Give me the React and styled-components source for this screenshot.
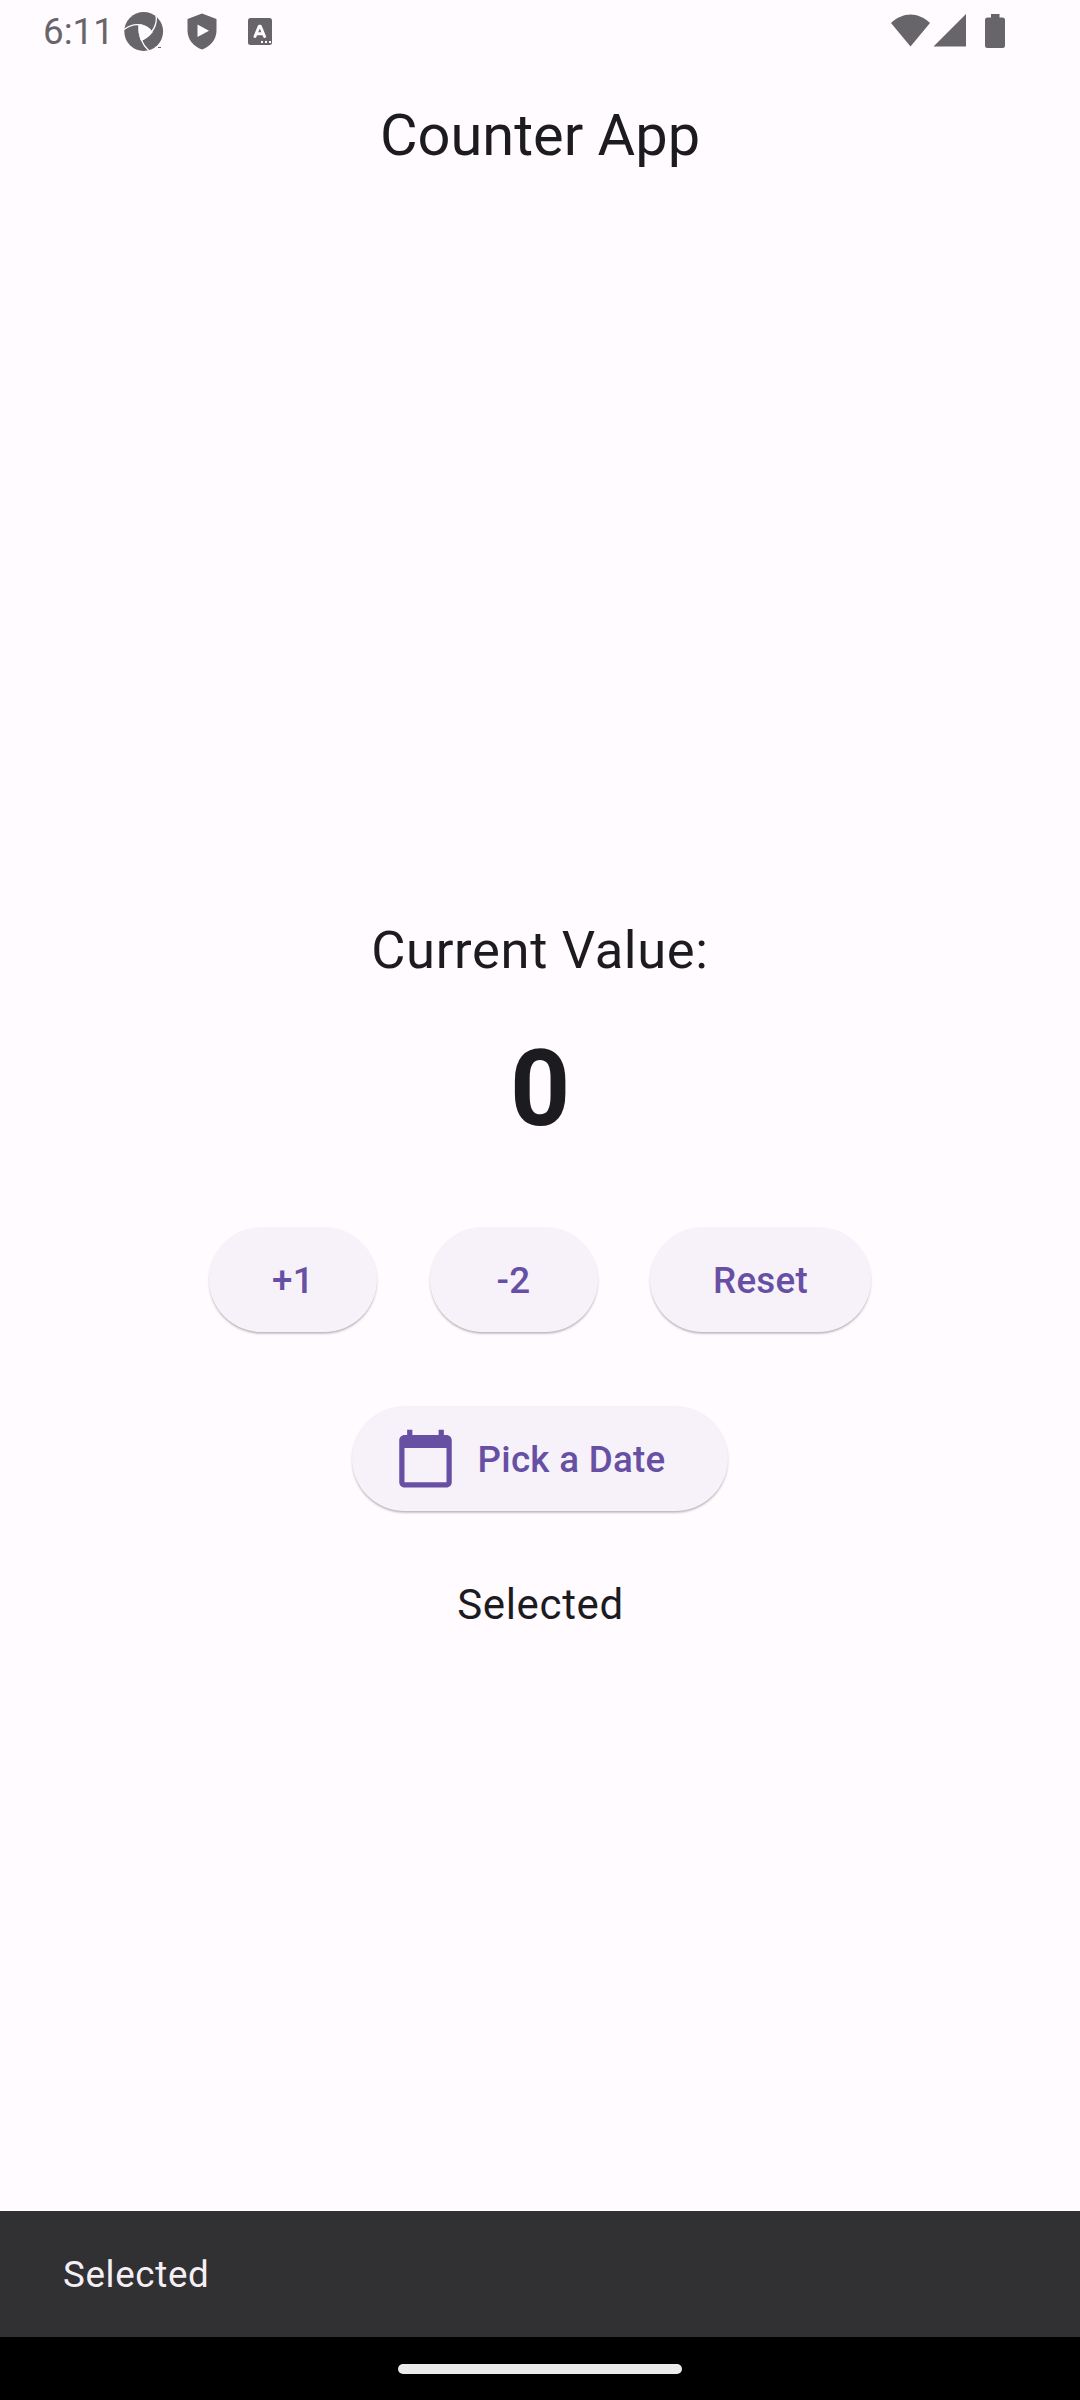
import React from "react";
import styled, { createGlobalStyle } from "styled-components";

const GlobalStyle = createGlobalStyle`
  * { box-sizing: border-box; }
  html, body { margin: 0; padding: 0; background: #fffbff; }
`;

const Screen = styled.div`
  width: 1080px;
  height: 2400px;
  display: flex;
  flex-direction: column;
  background: #fffbff;
  color: #1c1b1f;
  font-family: Roboto, "Liberation Sans", sans-serif;
  overflow: hidden;
`;

const StatusBar = styled.header`
  height: 63px;
  flex: none;
  display: flex;
  justify-content: space-between;
  padding: 0 75px 0 43px;
  color: #68656a;
`;

const StatusGroup = styled.div`
  display: flex;
  align-items: center;
`;

const Clock = styled.span`
  width: 81px;
  height: 63px;
  font-size: 36.75px;
  line-height: 63px;
`;

const Glyph = styled.svg`
  display: block;
  flex: none;
  width: ${(p) => p.$w}px;
  height: 63px;
  margin-left: ${(p) => p.$gap || 0}px;
  fill: currentColor;
`;

const AppBar = styled.div`
  height: 147px;
  flex: none;
  display: flex;
  align-items: center;
  justify-content: center;
  padding-bottom: 2px;
`;

const Title = styled.h1`
  margin: 0;
  font-size: 57.75px;
  font-weight: 400;
  line-height: 73px;
`;

const Body = styled.main`
  position: relative;
  flex: 1;
  display: flex;
  flex-direction: column;
  align-items: center;
  justify-content: center;
`;

const Label = styled.div`
  font-size: 52.5px;
  line-height: 75px;
  letter-spacing: 0.656px;
  margin-bottom: 26.25px;
`;

const Value = styled.div`
  height: 150px;
  padding-left: 1px;
  font-size: 105px;
  font-weight: 700;
  line-height: 152px;
  letter-spacing: 0.656px;
`;

const ButtonRow = styled.div`
  display: flex;
  gap: 52.5px;
  padding: 10.5px 0;
  margin-top: 52.5px;
`;

const Button = styled.button`
  display: flex;
  align-items: center;
  justify-content: center;
  gap: 21px;
  min-width: 168px;
  height: 105px;
  padding: 0 63px 0 ${(p) => (p.$withIcon ? 42 : 63)}px;
  border: 0;
  border-radius: 53px;
  background: #f7f2fa;
  color: #6750a4;
  font: 500 36.75px/52.5px Roboto, "Liberation Sans", sans-serif;
  letter-spacing: 0.2625px;
  white-space: nowrap;
  box-shadow: 0 2px 2px -0.5px rgba(0, 0, 0, 0.22), 0 2px 3px rgba(0, 0, 0, 0.08);
`;

const ButtonLabel = styled.span`
  padding-top: ${(p) => (p.$drop ? 3 : 2)}px;
`;

const CalendarIcon = styled.svg`
  width: 63px;
  height: 63px;
  fill: currentColor;
`;

const Selected = styled.div`
  height: 60px;
  margin-top: 52.5px;
  padding-left: 1px;
  font-size: 42px;
  line-height: 62px;
  letter-spacing: 0.656px;
`;

const Snackbar = styled.div`
  position: absolute;
  left: 0;
  right: 0;
  bottom: 0;
  height: 126px;
  display: flex;
  align-items: center;
  padding: 2px 63px 0;
  background: #313033;
  color: #f4eff4;
  font-size: 36.75px;
  line-height: 52.5px;
  letter-spacing: 0.656px;
`;

const NavBar = styled.footer`
  height: 63px;
  flex: none;
  display: flex;
  align-items: center;
  justify-content: center;
  background: #000;
`;

const Handle = styled.div`
  width: 284px;
  height: 10px;
  border-radius: 5px;
  background: #ebebeb;
`;

export default function App() {
  return (
    <>
      <GlobalStyle />
      <Screen>
        <StatusBar>
          <StatusGroup>
            <Clock>6:11</Clock>
            <Glyph $w={40} viewBox="124 0 40 63">
              <circle cx="143.7" cy="31.5" r="19.4" />
              <g fill="none" stroke="#fffbff" strokeWidth="1.3">
                <path d="M124 29.500Q132 23 142 25Q149 27 152 32.500" />
                <path d="M156 15Q158.500 30 141.500 40.500" />
                <path d="M139 25Q137.500 40 149.500 51.500" />
              </g>
              <path fill="#fffbff" d="M138.800 24.500Q148.500 25 152.600 32.300Q148.500 38 141.200 41Q137.800 33.500 138.800 24.500Z" />
              <path d="M158 47h3v1h-3z" />
            </Glyph>
            <Glyph $w={30} $gap={23} viewBox="187 0 30 63">
              <path
                fillRule="evenodd"
                d="M202 13.5L216.5 19V30.5C216.5 39.5 210.5 46.5 202 49.5C193.500 46.500 187.500 39.500 187.500 30.500V19ZM197.500 24.500V37L209 30.750Z"
              />
            </Glyph>
            <Glyph $w={24} $gap={31} viewBox="248 0 24 63">
              <rect x="248" y="18" width="24" height="27" rx="2.500" />
              <path
                fill="none"
                stroke="#fffbff"
                strokeWidth="2.9"
                strokeLinejoin="round"
                strokeLinecap="round"
                d="M255 36.500L259.200 26.200H260.400L264.600 36.500M257 33.800H262.800"
              />
              <path fill="#fffbff" d="M261 41h2v2h-2zM265 41h2v2h-2zM269 41h2v2h-2z" />
            </Glyph>
          </StatusGroup>
          <StatusGroup>
            <Glyph $w={40} viewBox="891 0 40 63">
              <path d="M910.500 46.500L891 23C903 11.500 918 11.500 930 23Z" />
            </Glyph>
            <Glyph $w={33} $gap={2} viewBox="933 0 33 63">
              <path d="M933.500 46.500L966 14V46.500Z" />
            </Glyph>
            <Glyph $w={20} $gap={19} viewBox="985 0 20 63">
              <path d="M991 14h8.500v3.500H1002.500q2.500 0 2.500 2.500V45.500q0 2.500-2.500 2.500H987.500q-2.500 0-2.500-2.500V20q0-2.500 2.500-2.500H991Z" />
            </Glyph>
          </StatusGroup>
        </StatusBar>
        <AppBar>
          <Title>Counter App</Title>
        </AppBar>
        <Body>
          <Label>Current Value:</Label>
          <Value>0</Value>
          <ButtonRow>
            <Button>
              <ButtonLabel>+1</ButtonLabel>
            </Button>
            <Button>
              <ButtonLabel>-2</ButtonLabel>
            </Button>
            <Button>
              <ButtonLabel>Reset</ButtonLabel>
            </Button>
          </ButtonRow>
          <ButtonRow>
            <Button $withIcon>
              <CalendarIcon viewBox="0 0 24 24">
                <path d="M20 3h-1V1h-2v2H7V1H5v2H4c-1.100 0-2 .9-2 2v16c0 1.100.9 2 2 2h16c1.100 0 2-.9 2-2V5c0-1.100-.9-2-2-2zm0 18H4V8h16v13z" />
              </CalendarIcon>
              <ButtonLabel $drop>Pick a Date</ButtonLabel>
            </Button>
          </ButtonRow>
          <Selected>Selected</Selected>
          <Snackbar>Selected</Snackbar>
        </Body>
        <NavBar>
          <Handle />
        </NavBar>
      </Screen>
    </>
  );
}
